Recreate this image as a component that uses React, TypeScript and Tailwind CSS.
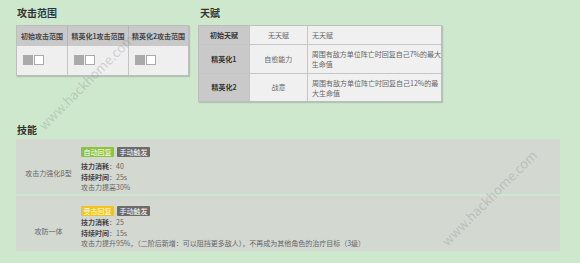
import React from "react";

const font = { fontFamily: '"Noto Sans CJK SC", "Noto Sans", sans-serif' };

function Squares() {
  return (
    <div className="flex gap-[1px] pl-[6px] pt-[9px]">
      <div className="w-[10px] h-[10px] bg-[#aaaaaa]" />
      <div className="w-[10px] h-[10px] bg-white border border-[#aaaaaa]" />
    </div>
  );
}

function Tag({ color, children }: { color: string; children: React.ReactNode }) {
  return (
    <span className={`inline-flex items-center justify-center h-[10px] w-[33px] text-[7px] text-white rounded-[1px] whitespace-nowrap ${color}`}>
      {children}
    </span>
  );
}

function Skill({
  name,
  tag,
  tagColor,
  cost,
  dur,
  desc,
  pt,
  mb,
}: {
  name: string;
  tag: string;
  tagColor: string;
  cost: string;
  dur: string;
  desc: string;
  pt: string;
  mb: string;
}) {
  return (
    <div className={`flex items-start h-[55px] bg-[#d3d8d1] ${pt}`}>
      <div className="w-[65px] self-center mt-[5px] text-center text-[7px] text-[#666] whitespace-nowrap">{name}</div>
      <div className="flex flex-col text-[7px] leading-[10.5px] text-[#666]">
        <div className={`flex gap-[3px] ${mb}`}>
          <Tag color={tagColor}>{tag}</Tag>
          <Tag color="bg-[#6b6b6b]">手动触发</Tag>
        </div>
        <div>
          <span className="font-bold text-[#444]">技力消耗</span>：{cost}
        </div>
        <div>
          <span className="font-bold text-[#444]">持续时间</span>：{dur}
        </div>
        <div className="whitespace-nowrap">{desc}</div>
      </div>
    </div>
  );
}

export default function App() {
  return (
    <div style={font} className="relative w-[580px] h-[263px] overflow-hidden bg-[#cde8cd] pl-[16px]">
      <div className="flex gap-[9px] pt-[6px]">
        <div className="w-[173px]">
          <div className="text-[10px] font-bold leading-[14px] text-[#333] pl-[1px]">攻击范围</div>
          <div className="mt-[5px] border border-[#bdbdbd] shadow-[1px_1px_1px_rgba(0,0,0,0.15)]">
            <div className="flex h-[20px] bg-[#c9c9c9] text-[7px] font-bold text-[#444] items-center">
              <div className="w-[50px] text-center">初始攻击范围</div>
              <div className="w-[61px] text-center border-l border-[#b5b5b5] h-full flex items-center justify-center">精英化1攻击范围</div>
              <div className="flex-1 text-center border-l border-[#b5b5b5] h-full flex items-center justify-center">精英化2攻击范围</div>
            </div>
            <div className="flex h-[29px] bg-[#efefef]">
              <div className="w-[50px]"><Squares /></div>
              <div className="w-[61px] border-l border-[#c5c5c5]"><Squares /></div>
              <div className="flex-1 border-l border-[#c5c5c5]"><Squares /></div>
            </div>
          </div>
        </div>
        <div className="w-[244px]">
          <div className="text-[10px] font-bold leading-[14px] text-[#333] pl-[2px]">天赋</div>
          <div className="mt-[5px] border border-[#bdbdbd] shadow-[1px_1px_1px_rgba(0,0,0,0.15)] text-[7px]">
            <div className="flex h-[18px]">
              <div className="w-[50px] bg-[#c9c9c9] font-bold text-[#333] flex items-center justify-center">初始天赋</div>
              <div className="w-[58px] bg-[#f0f0f0] text-[#666] flex items-center justify-center border-l border-[#c5c5c5]">无天赋</div>
              <div className="flex-1 bg-[#f0f0f0] text-[#666] flex items-center pl-[4px] border-l border-[#c5c5c5]">无天赋</div>
            </div>
            <div className="flex h-[29px] border-t border-[#c5c5c5]">
              <div className="w-[50px] bg-[#c9c9c9] font-bold text-[#333] flex items-center justify-center">精英化1</div>
              <div className="w-[58px] bg-[#f0f0f0] text-[#666] flex items-center justify-center border-l border-[#c5c5c5]">自愈能力</div>
              <div className="flex-1 bg-[#f0f0f0] text-[#666] flex items-center pl-[4px] leading-[10px] whitespace-nowrap border-l border-[#c5c5c5]">
                <div>周围有敌方单位阵亡时回复自己7%的最大<br />生命值</div>
              </div>
            </div>
            <div className="flex h-[28px] border-t border-[#c5c5c5]">
              <div className="w-[50px] bg-[#c9c9c9] font-bold text-[#333] flex items-center justify-center">精英化2</div>
              <div className="w-[58px] bg-[#f0f0f0] text-[#666] flex items-center justify-center border-l border-[#c5c5c5]">战意</div>
              <div className="flex-1 bg-[#f0f0f0] text-[#666] flex items-center pl-[4px] leading-[10px] whitespace-nowrap border-l border-[#c5c5c5]">
                <div>周围有敌方单位阵亡时回复自己12%的最<br />大生命值</div>
              </div>
            </div>
          </div>
        </div>
      </div>

      <div className="mt-[21px] text-[10px] font-bold leading-[14px] text-[#333] pl-[1px]">技能</div>
      <div className="mt-[2px] w-[544px] flex flex-col gap-[2px]">
        <Skill
          name="攻击力强化β型"
          tag="自动回复"
          tagColor="bg-[#8cc43c]"
          cost="40"
          dur="25s"
          desc="攻击力提高30%"
          pt="pt-[8px]"
          mb="mb-[4px]"
        />
        <Skill
          name="攻防一体"
          tag="受击回复"
          tagColor="bg-[#f2c31c]"
          cost="25"
          dur="15s"
          desc="攻击力提升95%，（二阶后新增：可以阻挡更多敌人），不再成为其他角色的治疗目标（3级）"
          pt="pt-[10px]"
          mb="mb-[1px]"
        />
      </div>

      <div className="pointer-events-none absolute left-[16px] top-[72px] w-[140px] text-center text-[13px] text-[rgba(140,140,140,0.35)] -rotate-45 whitespace-nowrap">
        www.hackhome.com
      </div>
      <div className="pointer-events-none absolute left-[414px] top-[188px] w-[150px] text-center text-[13px] text-[rgba(140,140,140,0.35)] -rotate-45 whitespace-nowrap">
        www.hackhome.com
      </div>
    </div>
  );
}
